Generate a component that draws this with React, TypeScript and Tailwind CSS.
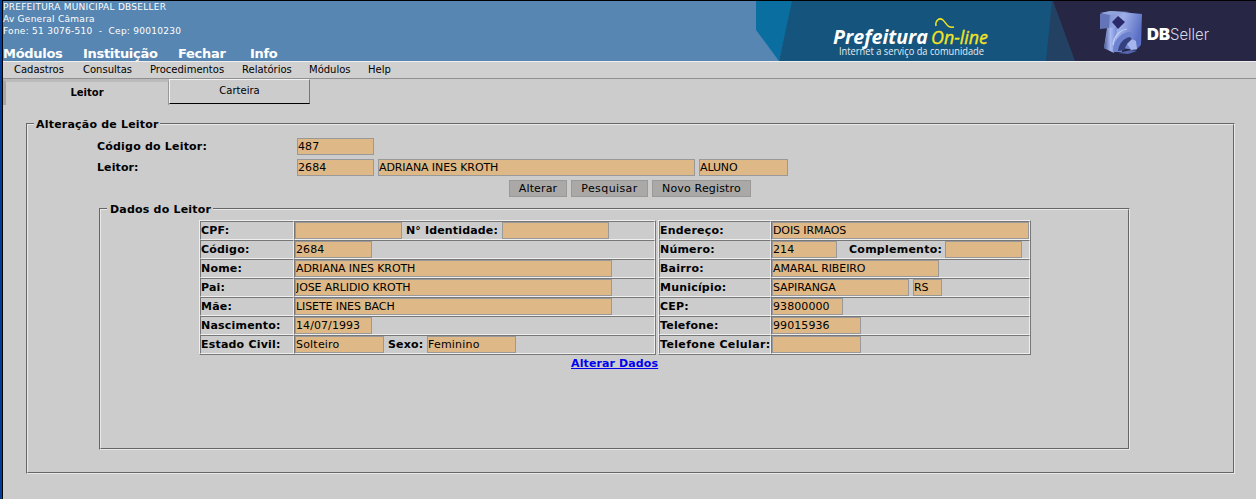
import type { ReactNode } from "react";

function Field({ w, children }: { w: string; children?: ReactNode }) {
  const numeric = typeof children === "string" && /^[\d/]+$/.test(children);
  return (
    <div className={`h-[17px] shrink-0 overflow-hidden whitespace-pre border border-[#999] bg-[#deb887] text-[11px] leading-[15px] ${numeric ? "tracking-[0.08px]" : "tracking-[-0.1px]"} ${w}`}>
      {children}
    </div>
  );
}

function Label({ children, className = "tracking-[0.2px]" }: { children: ReactNode; className?: string }) {
  return <span className={`shrink-0 whitespace-pre text-[11px] font-bold leading-[17px] ${className}`}>{children}</span>;
}

const cell = "flex h-[19px] border border-t-[#777] border-l-[#777] border-b-[#efefef] border-r-[#efefef]";

function Row({ label, labelW, labelClass, children }: { label: string; labelW: string; labelClass?: string; children: ReactNode }) {
  return (
    <div className="flex">
      <div className={`${cell} shrink-0 ${labelW}`}>
        <Label className={labelClass}>{label}</Label>
      </div>
      <div className={`${cell} min-w-0 flex-1`}>{children}</div>
    </div>
  );
}

function Group({ title, className, legend, children }: { title: string; className: string; legend: string; children: ReactNode }) {
  return (
    <section className={`border border-t-[#666] border-l-[#666] border-b-[#e8e8e8] border-r-[#e8e8e8] ${className}`}>
      <div className="h-full border border-t-[#e8e8e8] border-l-[#e8e8e8] border-b-[#666] border-r-[#666]">
        <div className="-mt-2 flex h-4 pl-[6px]">
          <h2 className={`whitespace-pre bg-[#ccc] text-[11px] font-bold leading-4 tracking-[0.2px] ${legend}`}>{title}</h2>
        </div>
        {children}
      </div>
    </section>
  );
}

function Button({ w, children }: { w: string; children: ReactNode }) {
  return <button className={`h-[17px] whitespace-pre border border-[#999] bg-[#aaa9a8] text-center text-[11px] leading-[15px] ${w}`}>{children}</button>;
}

function Banner() {
  return (
    <svg width="500" height="60" viewBox="756 1 500 60" className="block shrink-0">
      <defs>
        <linearGradient id="face" x1="0" y1="0" x2="1" y2=".35">
          <stop offset="0" stopColor="#7286c8" />
          <stop offset=".5" stopColor="#9fb0e8" />
          <stop offset="1" stopColor="#5a6fc4" />
        </linearGradient>
        <linearGradient id="leg" x1="0" y1="0" x2="1" y2="0">
          <stop offset="0" stopColor="#4c5c9c" />
          <stop offset=".5" stopColor="#a9baf2" />
          <stop offset="1" stopColor="#7388d0" />
        </linearGradient>
        <filter id="soft"><feGaussianBlur stdDeviation=".65" /></filter>
      </defs>
      <path d="M756 1h37l-14 60-23-31z" fill="#0a6fa0" />
      <path d="M792 1h265v60H779z" fill="#14547d" />
      <path d="M1052 1h12l16 60h-34z" fill="#234263" />
      <path d="M1053 1h203v60h-181z" fill="#272645" />
      <g fontFamily="Open Sans, sans-serif">
        <text x="833" y="44" fontSize="19.5" fontWeight="700" fontStyle="italic" fill="#fff" textLength="95" lengthAdjust="spacingAndGlyphs">Prefeitura</text>
        <text x="931" y="44" fontSize="19" fontStyle="italic" fill="#f4e51f" stroke="#f4e51f" strokeWidth=".35" textLength="57" lengthAdjust="spacingAndGlyphs">On-line</text>
        <text x="839" y="55" fontSize="10" fontWeight="500" fill="#e5eef4" textLength="145" lengthAdjust="spacingAndGlyphs">Internet a serviço da comunidade</text>
      </g>
      <path d="M936 26c-1-5 3-9 7-6 4 4 4 8 11 7" fill="none" stroke="#f4e51f" strokeWidth="1.5" />
      <g filter="url(#soft)">
        <path d="M1110 11l32 3-1 31-5 5-15-2-8 4-9-4 3-20z" fill="url(#face)" />
        <path d="M1100 14l10-3-1 17-9 1z" fill="#6375b8" />
        <path d="M1100 13l10-2 20 1-20 3z" fill="#91a4dc" />
        <path d="M1108 28l9-1-3 26-10-5z" fill="url(#leg)" />
        <path d="M1112 22l6-6 7 6-7 7z" fill="#29296b" />
        <path d="M1113 52c0-10 6-18 15-20 3 0 5 1 6 3-7 2-12 8-12 17z" fill="#6d82cf" />
        <path d="M1118 51c1-8 6-13 12-14l3 3c-5 2-8 6-8 10z" fill="#35417f" />
        <path d="M1127 44l5-5 4 2 1 8-6 1z" fill="#a5b5ed" />
        <path d="M1118 53l13-3 6 1-9 3z" fill="#5366ae" />
        <path d="M1113 45c1-9 7-15 14-16" fill="none" stroke="#c3d0fa" strokeWidth="1.2" />
      </g>
      <text x="1147" y="40" fontFamily="Inter, sans-serif" fontSize="15.5" fontWeight="900" fill="#fff" textLength="23" lengthAdjust="spacingAndGlyphs">DB</text>
      <text x="1170" y="40" fontFamily="Inter, sans-serif" fontSize="16" fontWeight="300" fill="#d9d9e5" textLength="39" lengthAdjust="spacingAndGlyphs">Seller</text>
    </svg>
  );
}

export default function App() {
  return (
    <div className="flex h-[499px] w-[1256px] overflow-hidden bg-[#ccc] text-black [font-family:'DejaVu_Sans',sans-serif]">
      <div className="w-[3px] shrink-0 border-r border-black bg-[#003c98]" />
      <div className="min-w-0 flex-1 border-t border-black">
        <header className="flex h-[60px] justify-between bg-[#5786b2] text-white">
          <div className="whitespace-pre">
            <div className="text-[9px] leading-3 tracking-[0.26px]">
              <p>PREFEITURA MUNICIPAL DBSELLER</p>
              <p>Av General Câmara</p>
              <p>Fone: 51 3076-510  -  Cep: 90010230</p>
            </div>
            <nav className="mt-[9px] flex text-[13px] font-bold leading-4 tracking-[-0.3px]">
              <a className="w-20">Módulos</a>
              <a className="w-[95px]">Instituição</a>
              <a className="w-[72px]">Fechar</a>
              <a>Info</a>
            </nav>
          </div>
          <Banner />
        </header>
        <nav className="flex h-[18px] border-t border-b border-t-[#efefef] border-b-[#909090] bg-[#d0d0d0] pl-[11px] text-[10px] leading-4">
          <a className="w-[69px]">Cadastros</a>
          <a className="w-[67px]">Consultas</a>
          <a className="w-[92px]">Procedimentos</a>
          <a className="w-[67px]">Relatórios</a>
          <a className="w-[59px]">Módulos</a>
          <a>Help</a>
        </nav>
        <div className="flex h-[26px] text-center">
          <div className="w-[166px] border-t-[3px] border-l-[3px] border-r border-t-[#bbb] border-l-[#aaa6a5] border-r-[#999] text-[10px] font-bold leading-[22px]">Leitor</div>
          <div className="h-[25px] w-[141px] border border-t-[#f2f2f2] border-l-[#f2f2f2] border-b-black border-r-[#777] text-[10px] leading-[22px]">Carteira</div>
        </div>
        <main className="pl-[23px] pt-[18px]">
          <Group title="Alteração de Leitor" className="h-[351px] w-[1209px]" legend="w-[126px] pl-[2px]">
            <div className="ml-[69px] mt-[5px] flex">
              <Label className="w-[200px] tracking-[0.2px]">Código do Leitor:</Label>
              <Field w="w-[77px]">487</Field>
            </div>
            <div className="ml-[69px] mt-1 flex">
              <Label className="w-[200px] tracking-[0.1px]">Leitor:</Label>
              <div className="flex gap-1">
                <Field w="w-[77px]">2684</Field>
                <Field w="w-[317px]">ADRIANA INES KROTH</Field>
                <Field w="w-[89px]">ALUNO</Field>
              </div>
            </div>
            <div className="ml-[481px] mt-1 flex gap-1">
              <Button w="w-[58px] tracking-[0.12px]">Alterar</Button>
              <Button w="w-[77px] tracking-[0.4px]">Pesquisar</Button>
              <Button w="w-[99px] tracking-[0.16px]">Novo Registro</Button>
            </div>
            <div className="ml-[71px] mt-[11px]">
              <Group title="Dados do Leitor" className="h-[242px] w-[1031px]" legend="w-[106px] pl-[3px]">
                <div className="ml-[98px] mt-[2px] flex gap-[2px]">
                  <div className="w-[457px] border border-t-[#efefef] border-l-[#efefef] border-b-[#777] border-r-[#777]">
                    <Row label="CPF:" labelW="w-[94px]">
                      <Field w="w-[107px]" />
                      <Label className="w-[100px] pl-1 tracking-[0.15px]">N° Identidade:</Label>
                      <Field w="w-[107px]" />
                    </Row>
                    <Row label="Código:" labelW="w-[94px]"><Field w="w-[77px]">2684</Field></Row>
                    <Row label="Nome:" labelW="w-[94px]"><Field w="w-[317px]">ADRIANA INES KROTH</Field></Row>
                    <Row label="Pai:" labelW="w-[94px]"><Field w="w-[317px]">JOSE ARLIDIO KROTH</Field></Row>
                    <Row label="Mãe:" labelW="w-[94px]"><Field w="w-[317px]">LISETE INES BACH</Field></Row>
                    <Row label="Nascimento:" labelW="w-[94px]"><Field w="w-[77px]">14/07/1993</Field></Row>
                    <Row label="Estado Civil:" labelW="w-[94px]">
                      <Field w="w-[89px] tracking-[0.2px]">Solteiro</Field>
                      <Label className="w-[43px] pl-1 tracking-[0.15px]">Sexo:</Label>
                      <Field w="w-[89px] tracking-[0.2px]">Feminino</Field>
                    </Row>
                  </div>
                  <div className="w-[373px] border border-t-[#efefef] border-l-[#efefef] border-b-[#777] border-r-[#777]">
                    <Row label="Endereço:" labelW="w-[112px]"><Field w="w-[257px]">DOIS IRMAOS</Field></Row>
                    <Row label="Número:" labelW="w-[112px]">
                      <Field w="w-[65px]">214</Field>
                      <Label className="w-[108px] pl-3 tracking-[0.25px]">Complemento:</Label>
                      <Field w="w-[77px]" />
                    </Row>
                    <Row label="Bairro:" labelW="w-[112px]"><Field w="w-[167px]">AMARAL RIBEIRO</Field></Row>
                    <Row label="Município:" labelW="w-[112px]">
                      <div className="flex gap-1">
                        <Field w="w-[137px]">SAPIRANGA</Field>
                        <Field w="w-[29px]">RS</Field>
                      </div>
                    </Row>
                    <Row label="CEP:" labelW="w-[112px]"><Field w="w-[71px]">93800000</Field></Row>
                    <Row label="Telefone:" labelW="w-[112px]"><Field w="w-[89px]">99015936</Field></Row>
                    <Row label="Telefone Celular:" labelW="w-[112px]" labelClass="tracking-[0.36px]"><Field w="w-[89px]" /></Row>
                  </div>
                </div>
                <a className="ml-[470px] block w-fit whitespace-pre text-[11px] font-bold leading-[17px] tracking-[0.12px] text-[#0000ee] underline">Alterar Dados</a>
              </Group>
            </div>
          </Group>
        </main>
      </div>
    </div>
  );
}
